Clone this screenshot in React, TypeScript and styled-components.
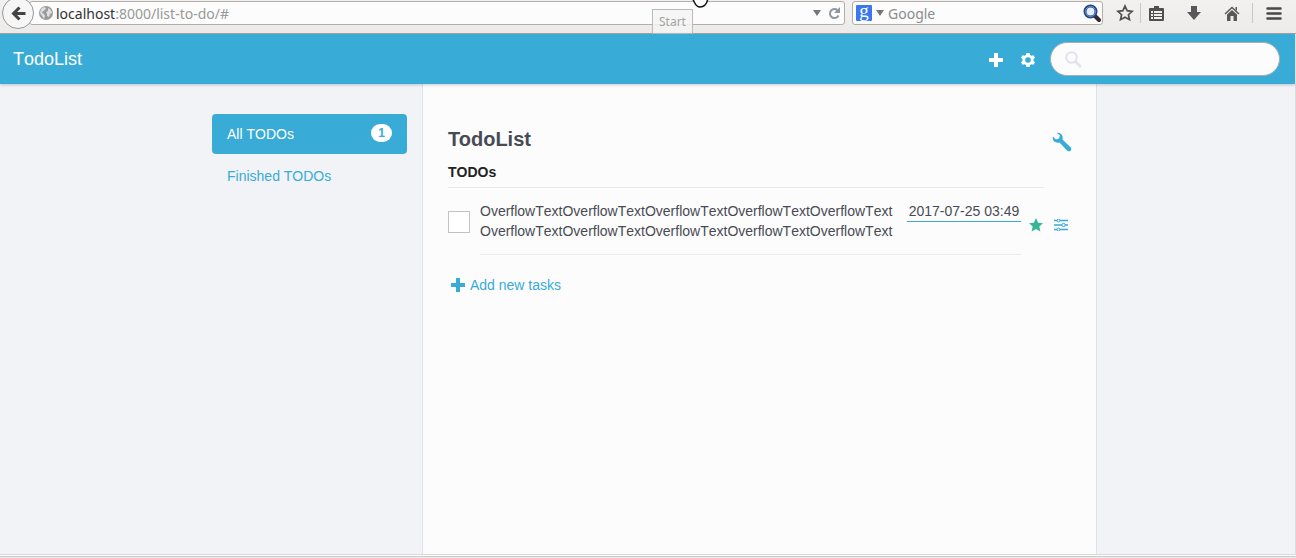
import React from "react";
import styled, { createGlobalStyle } from "styled-components";

const blue = "#39abd7";

const GlobalStyle = createGlobalStyle`
  *, *::before, *::after { box-sizing: border-box; }
  body {
    margin: 0;
    background: #f1f3f7;
    color: #484b54;
    font: 14px/20px "Liberation Sans", Arial, sans-serif;
    font-kerning: none;
  }
  button, input { font: inherit; font-kerning: inherit; color: inherit; }
  button { padding: 0; border: 0; background: none; cursor: pointer; }
  svg { display: block; }
  h1, h2, ul { margin: 0; padding: 0; }
`;

const Window = styled.div`
  display: flex;
  flex-direction: column;
  min-height: 100vh;
`;

const BrowserBar = styled.div`
  position: relative;
  display: flex;
  align-items: flex-start;
  height: 34px;
  padding: 1px 14px 0 2px;
  background: linear-gradient(#f2f1f0, #edebe9);
  border-bottom: 1px solid #aaa59f;
  color: #4c4c4c;
  font-family: "Noto Sans", sans-serif;
`;

const BackButton = styled.button`
  position: relative;
  flex: none;
  width: 32px;
  height: 32px;
  margin: -4px -5px 0 0;
  border: 1px solid #96989f;
  border-radius: 50%;
  background: #f6f6f6;
  display: grid;
  place-items: center;
`;

const FieldBox = styled.label`
  display: flex;
  align-items: center;
  height: 24px;
  border: 1px solid #b3aea9;
  border-radius: 3px;
  background: #fcfcfc;
  line-height: 22px;
`;

const AddressField = styled(FieldBox)`
  flex: 1;
  min-width: 0;
  padding: 0 2px 0 9px;
  gap: 3px;
`;

const EngineField = styled(FieldBox)`
  flex: none;
  width: 251px;
  margin-left: 7px;
  padding: 0 1px 0 3px;
  gap: 4px;
`;

const Host = styled.span`
  padding-top: 2px;
  color: #333;
`;

const BareInput = styled.input`
  flex: 1;
  min-width: 0;
  padding: 0;
  border: 0;
  outline: 0;
  background: none;
  color: #999;
  &::placeholder { color: #8c8c8c; opacity: 1; }
`;

const BarInput = styled(BareInput)`
  padding-top: 2px;
`;

const AddressInput = styled(BarInput)`
  margin-left: -3px;
`;

const EngineBadge = styled.span`
  flex: none;
  width: 16px;
  height: 16px;
  border-radius: 1px;
  background: #3b78f0;
  color: #fff;
  font: 19px/12px "Liberation Serif", serif;
  text-align: center;
`;

const Tools = styled.div`
  display: flex;
  align-items: center;
  height: 24px;
  margin-left: 13px;
`;

const ToolButton = styled.button<{ $gap?: number }>`
  margin-left: ${(p) => p.$gap ?? 0}px;
`;

const Divider = styled.span<{ $gap: number }>`
  width: 1px;
  height: 20px;
  margin-left: ${(p) => p.$gap}px;
  background: #c6c6c8;
`;

const Tooltip = styled.div`
  position: absolute;
  left: 652px;
  top: 9px;
  width: 41px;
  height: 25px;
  border: 1px solid #b9bbbb;
  background: rgba(245, 245, 245, 0.85);
  color: #a3a3a3;
  font-size: 12px;
  line-height: 24px;
  text-align: center;
`;

const Pointer = styled.svg`
  position: absolute;
  left: 691px;
  top: 0;
`;

const Header = styled.header`
  position: relative;
  display: flex;
  align-items: center;
  height: 50px;
  margin-right: 1px;
  padding: 0 15px 0 13px;
  background: ${blue};
  box-shadow: 0 1px 3px rgba(0, 0, 0, 0.2);
  color: #fff;
`;

const Brand = styled.a`
  flex: 1;
  color: #fff;
  font-size: 18px;
  text-decoration: none;
`;

const HeaderActions = styled.div`
  display: flex;
  gap: 18px;
  margin-right: 15px;
  padding-top: 2px;
`;

const Search = styled.label`
  display: flex;
  align-items: center;
  width: 230px;
  height: 34px;
  padding: 0 14px;
  gap: 8px;
  border: 1px solid #a9adb3;
  border-radius: 17px;
  background: #fcfcfd;
`;

const Body = styled.div`
  display: flex;
  flex: 1;
  justify-content: center;
  padding-left: 14px;
  border-right: 1px solid #dcdcdc;
`;

const Sidebar = styled.nav`
  width: 210px;
  padding: 30px 15px 0 0;
`;

const NavList = styled.ul`
  display: grid;
  gap: 2px;
  list-style: none;
`;

const NavLink = styled.a<{ $active?: boolean }>`
  display: flex;
  justify-content: space-between;
  align-items: center;
  height: 40px;
  padding: 0 15px;
  border-radius: 4px;
  background: ${(p) => (p.$active ? blue : "transparent")};
  color: ${(p) => (p.$active ? "#fff" : blue)};
  text-decoration: none;
`;

const Badge = styled.span`
  width: 21px;
  height: 18px;
  margin-top: -2px;
  border-radius: 9px;
  background: #fff;
  color: ${blue};
  font-size: 12px;
  font-weight: bold;
  line-height: 18px;
  text-align: center;
`;

const Main = styled.main`
  width: 675px;
  padding: 44px 24px 24px 25px;
  border: solid #dfe1e6;
  border-width: 0 1px;
  background: #fcfcfc;
`;

const TitleRow = styled.div`
  display: flex;
  justify-content: space-between;
  align-items: flex-end;
  height: 24px;
`;

const Title = styled.h1`
  font-size: 20px;
  font-kerning: normal;
  line-height: 26px;
`;

const Subtitle = styled.h2`
  margin: 10px 28px 13px 0;
  padding-bottom: 5px;
  border-bottom: 1px solid #eaeaea;
  color: #222;
  font-size: 14px;
`;

const TaskRow = styled.div`
  display: flex;
  align-items: flex-start;
`;

const Checkbox = styled.input`
  appearance: none;
  flex: none;
  width: 22px;
  height: 22px;
  margin: 10px 10px 0 0;
  border: 1px solid #c6c2c2;
  background: #fff;
`;

const TaskContent = styled.div`
  display: flex;
  flex: 1;
  align-items: flex-start;
  min-width: 0;
  padding-bottom: 13px;
  border-bottom: 1px solid #eaeaea;
`;

const TaskText = styled.label`
  flex: 1;
  min-width: 0;
`;

const Due = styled.time`
  flex: none;
  min-width: 114px;
  border-bottom: 1px solid ${blue};
  text-align: center;
`;

const TaskActions = styled.div`
  display: flex;
  align-items: center;
  gap: 11px;
  margin: 17px 4px 0 8px;
`;

const AddButton = styled.button`
  display: flex;
  align-items: center;
  gap: 5px;
  margin: 20px 0 0 3px;
  color: ${blue};
`;

const StatusBar = styled.footer`
  height: 4px;
  border: solid #d8d8d8;
  border-width: 1px 0;
  border-bottom-color: #eee;
  background: #fff;
  box-shadow: inset 0 -1px #c9c9c9;
`;

const Plus = () => (
  <svg width="14" height="14" viewBox="0 0 14 14" fill="currentColor">
    <path d="M5 0h4v5h5v4H9v5H5V9H0V5h5z" />
  </svg>
);

const Triangle = () => (
  <svg width="8" height="6" viewBox="0 0 8 6" fill="#77777a">
    <path d="M0 0h8L4 6z" />
  </svg>
);

const Chrome = () => (
  <BrowserBar>
    <BackButton aria-label="Back">
      <svg width="15" height="15" viewBox="0 0 15 15" fill="none" stroke="#444" strokeWidth="3">
        <path d="M8.500 1.500L2.500 7.500L8.500 13.500M3 7.500h11.500" />
      </svg>
    </BackButton>
    <AddressField>
      <svg width="14" height="14" viewBox="0 0 14 14">
        <circle cx="7" cy="7" r="7" fill="#9a9a9a" />
        <path d="M2 3l3-2 2 1-1 2-2 1-1 2 2 1 1 2-1 3-2-3-2-3zM9 2l3 2 1 3-2 1-1 3-2-1V8L7 6l2-1z" fill="#dedede" />
      </svg>
      <Host>localhost</Host>
      <AddressInput aria-label="Address" defaultValue=":8000/list-to-do/#" />
      <Triangle />
      <svg width="18" height="13" viewBox="0 0 18 13">
        <path d="M13.500 3.200A4.500 4.500 0 1 0 14.500 8.500" fill="none" stroke="#8f959f" strokeWidth="2" />
        <path d="M16 0v6h-6z" fill="#8f959f" />
      </svg>
    </AddressField>
    <EngineField>
      <EngineBadge>g</EngineBadge>
      <Triangle />
      <BarInput aria-label="Web search" placeholder="Google" />
      <svg width="18" height="18" viewBox="0 0 18 18">
        <path d="M12 12l4 4" stroke="#33282b" strokeWidth="4" strokeLinecap="round" />
        <circle cx="7.500" cy="7.500" r="5.500" fill="#e4ecf7" stroke="#24448a" strokeWidth="3" />
        <circle cx="7.500" cy="7.500" r="5" fill="none" stroke="#6f93ce" strokeWidth="1" />
      </svg>
    </EngineField>
    <Tools>
      <ToolButton aria-label="Bookmark">
        <svg width="18" height="18" viewBox="0 0 18 18" fill="none" stroke="#505052" strokeWidth="1.700">
          <path d="M9 2l2.100 4.700 5 .6-3.700 3.400 1.100 5L9 13.200l-4.500 2.500 1.100-5L1.900 7.300l5-.6z" />
        </svg>
      </ToolButton>
      <Divider $gap={6} />
      <ToolButton $gap={8} aria-label="Bookmarks menu">
        <svg width="15" height="15" viewBox="0 0 15 15">
          <path d="M5 0h5v2h4a1 1 0 0 1 1 1v11a1 1 0 0 1-1 1H1a1 1 0 0 1-1-1V3a1 1 0 0 1 1-1h4z" fill="#505052" />
          <path d="M2 5h2v2H2zM5 5h8v2H5zM2 8h2v2H2zM5 8h8v2H5zM2 11h2v2H2zM5 11h8v2H5z" fill="#f0efee" />
        </svg>
      </ToolButton>
      <ToolButton $gap={23} aria-label="Downloads">
        <svg width="14" height="14" viewBox="0 0 14 14" fill="#58585a">
          <path d="M4 0h6v6h4l-7 8-7-8h4z" />
        </svg>
      </ToolButton>
      <ToolButton $gap={23} aria-label="Home">
        <svg width="16" height="15" viewBox="0 0 16 15" fill="#58585a">
          <path d="M8 4l5 4.500V15H9.500v-5h-3v5H3V8.500z" />
          <path d="M1 8l7-6.500L15 8" fill="none" stroke="#58585a" strokeWidth="1.500" />
          <path d="M11.500 1H13v4l-1.500-1.500z" />
        </svg>
      </ToolButton>
      <Divider $gap={12} />
      <ToolButton $gap={13} aria-label="Menu">
        <svg width="16" height="13" viewBox="0 0 16 13" stroke="#484848" strokeWidth="2.500" strokeLinecap="round">
          <path d="M1.500 1.500h13M1.500 6.500h13M1.500 11.500h13" />
        </svg>
      </ToolButton>
    </Tools>
    <Tooltip>Start</Tooltip>
    <Pointer width="18" height="8" viewBox="0 0 18 8">
      <path d="M1 -2C4 2 4 7 9 7s7-3 8-9" fill="#fff" stroke="#111" strokeWidth="1.500" />
    </Pointer>
  </BrowserBar>
);

export default function App() {
  return (
    <Window>
      <GlobalStyle />
      <Chrome />
      <Header>
        <Brand href="#">TodoList</Brand>
        <HeaderActions>
          <button aria-label="Add list"><Plus /></button>
          <button aria-label="Settings">
            <svg width="14" height="14" viewBox="0 0 14 14">
              <path fillRule="evenodd" fill="#fff" d="M5.500 0h3l.5 2 1.500.8 2-.6L14 4.700 12.500 6v2L14 9.300l-1.500 2.500-2-.6L9 12l-.5 2h-3L5 12l-1.500-.8-2 .6L0 9.300 1.500 8V6L0 4.700l1.500-2.500 2 .6L5 2zM7 4.200a2.800 2.800 0 1 0 0 5.600 2.800 2.800 0 0 0 0-5.600z" />
            </svg>
          </button>
        </HeaderActions>
        <Search>
          <svg width="17" height="17" viewBox="0 0 17 17" fill="none" stroke="#e2e4e9">
            <circle cx="6.500" cy="6.500" r="5.300" strokeWidth="2" />
            <path d="M10.500 10.500l5.500 5.500" strokeWidth="2.500" />
          </svg>
          <BareInput aria-label="Search tasks" />
        </Search>
      </Header>
      <Body>
        <Sidebar>
          <NavList>
            <li><NavLink href="#all" $active>All TODOs<Badge>1</Badge></NavLink></li>
            <li><NavLink href="#finished">Finished TODOs</NavLink></li>
          </NavList>
        </Sidebar>
        <Main>
          <TitleRow>
            <Title>TodoList</Title>
            <button aria-label="List options">
              <svg width="20" height="20" viewBox="0 0 20 20" fill={blue}>
                <path d="M4.500.8L8 3.500 7 6.500 4 7.500.8 4.500C0 8.500 3.500 11.500 7.500 10.500l7.500 8c1 1 2.500 1 3.500.2 1-1 1-2.500 0-3.500L10.500 7.500C11.700 3.500 8.500 0 4.500.8z" />
              </svg>
            </button>
          </TitleRow>
          <Subtitle>TODOs</Subtitle>
          <TaskRow>
            <Checkbox type="checkbox" id="task" />
            <TaskContent>
              <TaskText htmlFor="task">
                OverflowTextOverflowTextOverflowTextOverflowTextOverflowText{" "}
                OverflowTextOverflowTextOverflowTextOverflowTextOverflowText
              </TaskText>
              <Due>2017-07-25 03:49</Due>
            </TaskContent>
            <TaskActions>
              <button aria-label="Star task">
                <svg width="14" height="14" viewBox="0 0 14 14" fill="#35b597">
                  <path d="M7 0l2.100 4.700 4.900.5-3.700 3.400 1.100 5L7 11.100l-4.400 2.500 1.100-5L0 5.200l4.900-.5z" />
                </svg>
              </button>
              <button aria-label="Task options">
                <svg width="14" height="12" viewBox="0 0 14 12" fill="#fcfcfc" stroke={blue}>
                  <path d="M0 1.500h14M0 6h14M0 10.500h14" strokeWidth="1.500" />
                  <circle cx="4.500" cy="1.500" r="1.400" />
                  <circle cx="9.500" cy="6" r="1.700" />
                  <circle cx="4.500" cy="10.500" r="1.400" />
                </svg>
              </button>
            </TaskActions>
          </TaskRow>
          <AddButton><Plus />Add new tasks</AddButton>
        </Main>
      </Body>
      <StatusBar />
    </Window>
  );
}
